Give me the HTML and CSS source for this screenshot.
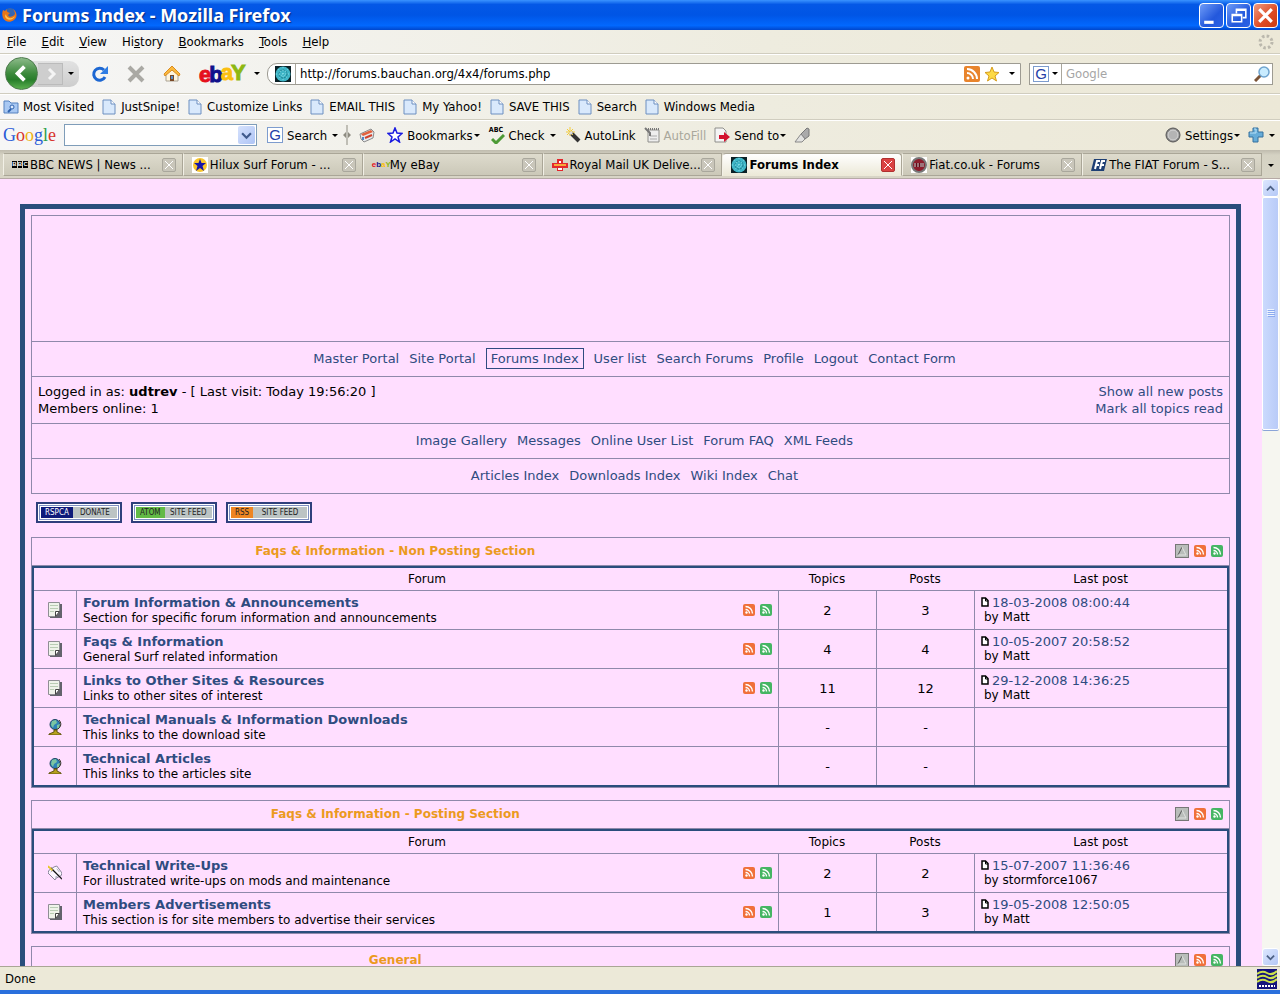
FILE: index.html
```html
<!DOCTYPE html>
<html lang="en">
<head>
    <meta charset="UTF-8">
    <meta name="viewport" content="width=device-width, initial-scale=1.0">
    <title>Forums Index</title>
    <link rel="stylesheet" href="styles.css">
</head>
<body>
    <div class="title-bar">
        <svg class="icon" viewBox="0 0 16 16"><circle cx="8" cy="7" r="6" fill="#3565b0"/><path d="M1 3l2 1 2-2c-1 3 1 3 3 4l-2 2c1 3 5 2 7-1 0-2-1-3-2-5 4 3 5 8 1 11s-9 2-11-2c-1-3-1-5 0-8z" fill="#e8751a"/><path d="M4 7c0 4 5 6 9 2-2 5-9 5-10 0z" fill="#ffc44a"/></svg>
        <span class="title-text">Forums Index - Mozilla Firefox</span>
        <button class="win-btn" aria-label="Minimize"><svg viewBox="0 0 22 22"><path d="M4 16h9v3H4z" fill="#fff"/></svg></button>
        <button class="win-btn" aria-label="Restore"><svg viewBox="0 0 22 22"><path d="M9 9V5h9v8h-3M9 6h9" fill="none" stroke="#fff" stroke-width="1.500"/><path d="M5 10h9v7H5zM5 11h9" fill="none" stroke="#fff" stroke-width="1.500"/></svg></button>
        <button class="win-btn win-close" aria-label="Close"><svg viewBox="0 0 22 22"><path d="M5 5l12 12M17 5L5 17" stroke="#fff" stroke-width="3"/></svg></button>
    </div>

    <div class="bar menu-bar">
        <button><u>F</u>ile</button>
        <button><u>E</u>dit</button>
        <button><u>V</u>iew</button>
        <button>Hi<u>s</u>tory</button>
        <button><u>B</u>ookmarks</button>
        <button><u>T</u>ools</button>
        <button><u>H</u>elp</button>
        <svg class="icon throbber" viewBox="0 0 16 16"><circle cx="8" cy="8" r="6" fill="none" stroke="#bbb8ad" stroke-width="3" stroke-dasharray="2.5 2.2"/></svg>
    </div>

    <div class="bar nav-bar">
        <div class="history-btns">
            <button class="back-btn" aria-label="Back"><svg viewBox="0 0 32 32"><path d="M19 9l-7 7 7 7" fill="none" stroke="#fff" stroke-width="4"/></svg></button>
            <button class="forward-btn" aria-label="Forward"><svg viewBox="0 0 24 20"><path d="M11 5l5 5-5 5" fill="none" stroke="#f4f4f4" stroke-width="3"/></svg></button>
            <button class="arrow" aria-label="Recent pages"></button>
        </div>
        <button class="nav-btn" aria-label="Reload"><svg viewBox="0 0 18 18"><path d="M14 12a6 6 0 1 1-1-7" fill="none" stroke="#1d67d2" stroke-width="3"/><path d="M17 1v8H9z" fill="#2f7de4"/></svg></button>
        <button class="nav-btn" aria-label="Stop"><svg viewBox="0 0 18 18"><path d="M2 2l14 14M16 2L2 16" stroke="#aaa9a4" stroke-width="4"/></svg></button>
        <button class="nav-btn" aria-label="Home"><svg viewBox="0 0 18 18"><path d="M3 9l6-6 6 6v7H3z" fill="#fff5dd" stroke="#a9a294"/><path d="M9 1L1 9l1 2 7-6 7 6 1-2z" fill="#fbb93c" stroke="#d98b20"/><path d="M7 10h4v6H7z" fill="#7a4a28"/><path d="M8 11h2v3H8z" fill="#5a91cf"/></svg></button>
        <button class="ebay-btn" aria-label="eBay"><span class="eb-e">e</span><span class="eb-b">b</span><span class="eb-a">a</span><span class="eb-y">Y</span></button>
        <button class="arrow ebay-arrow" aria-label="eBay menu"></button>
        <div class="url-box">
            <svg class="icon"><use href="#i-surf"/></svg>
            <input class="url-input" type="text" aria-label="Location" value="http://forums.bauchan.org/4x4/forums.php">
            <svg class="icon"><use href="#i-rss"/></svg>
            <svg class="icon" viewBox="0 0 16 16"><path d="M8 1l2 5 5 .5-4 3.500 1.500 5L8 12l-4.500 3L5 10 1 6.500 6 6z" fill="#fdda45" stroke="#d69d1c"/></svg>
            <button class="arrow url-arrow" aria-label="Show history"></button>
        </div>
        <div class="search-box">
            <span class="g-icon">G</span>
            <button class="arrow" aria-label="Search engine"></button>
            <input class="search-input" type="text" aria-label="Search" placeholder="Google">
            <svg class="icon" viewBox="0 0 16 16"><path d="M1 15l6-6" stroke="#7b5336" stroke-width="3"/><circle cx="10" cy="6" r="5" fill="#c9ecff" stroke="#6fa4cf" stroke-width="1.500"/></svg>
        </div>
    </div>

    <div class="bar bookmarks-bar">
        <a href="#"><svg class="icon" viewBox="0 0 16 16"><path d="M1 2h5l2 2h7v10H1z" fill="#a8c8f3" stroke="#5481bf"/><circle cx="9" cy="8" r="2" fill="#dcebff" stroke="#2e62ae"/><path d="M8 10l-3 3" stroke="#2e62ae" stroke-width="2"/></svg>Most Visited</a>
        <a href="#"><svg class="icon"><use href="#i-page"/></svg>JustSnipe!</a>
        <a href="#"><svg class="icon"><use href="#i-page"/></svg>Customize Links</a>
        <a href="#"><svg class="icon"><use href="#i-page"/></svg>EMAIL THIS</a>
        <a href="#"><svg class="icon"><use href="#i-page"/></svg>My Yahoo!</a>
        <a href="#"><svg class="icon"><use href="#i-page"/></svg>SAVE THIS</a>
        <a href="#"><svg class="icon"><use href="#i-page"/></svg>Search</a>
        <a href="#"><svg class="icon"><use href="#i-page"/></svg>Windows Media</a>
    </div>

    <div class="bar google-bar">
        <button class="google-logo"><span class="g-blue">G</span><span class="g-red">o</span><span class="g-yellow">o</span><span class="g-blue">g</span><span class="g-green">l</span><span class="g-red">e</span></button>
        <div class="combo">
            <input type="text" aria-label="Google search">
            <button aria-label="Search history"><svg viewBox="0 0 10 10"><path d="M1 3l4 4 4-4" fill="none" stroke="#3f5a8c" stroke-width="2"/></svg></button>
        </div>
        <button class="tool search-tool"><span class="g-icon">G</span>Search</button>
        <button class="arrow" aria-label="Search options"></button>
        <svg class="splitter" viewBox="0 0 8 20"><path d="M4 0v20" stroke="#8d8b80"/><path d="M3 7v6L0 10zM5 7v6l3-3z" fill="#8d8b80"/></svg>
        <button class="tool" aria-label="Gadgets"><svg class="icon" viewBox="0 0 16 16"><path d="M1 7l11-5 3 3-1 6-9 4-3-3z" fill="#e6e9ec" stroke="#8b8b8b"/><path d="M2 7l10-4 2 2-10 4z" fill="#e2613d"/><path d="M6 11l7-3" stroke="#d0402b" stroke-width="2"/><path d="M4 10v3" stroke="#4d84c5" stroke-width="2"/></svg></button>
        <button class="tool bookmarks-tool"><svg class="icon" viewBox="0 0 16 16"><path d="M8 1l2 5 5 .5-4 3.500 1.500 5L8 12l-4.500 3L5 10 1 6.500 6 6z" fill="#fff" stroke="#1a1ae0" stroke-width="1.500"/></svg>Bookmarks<i class="caret"></i></button>
        <button class="tool check-tool"><span class="abc">ABC<svg viewBox="0 0 14 10"><path d="M1 5l4 4 8-8" fill="none" stroke="#4c9a35" stroke-width="3"/></svg></span>Check</button>
        <button class="arrow" aria-label="Check options"></button>
        <button class="tool autolink-tool"><svg class="icon" viewBox="0 0 16 16"><path d="M6 6l8 8" stroke="#333" stroke-width="4"/><path d="M5 0v9M1 5h9M2 2l6 6M8 2L2 8" stroke="#f2cb3a"/><path d="M5 5l2 2" stroke="#ddd" stroke-width="3"/></svg>AutoLink</button>
        <button class="tool" disabled><svg class="icon" viewBox="0 0 16 16"><path d="M4 3h11v12H4z" fill="#eee" stroke="#8e8e8a"/><path d="M4 2h11" stroke="#777" stroke-width="2" stroke-dasharray="1 1"/><path d="M6 9h7M6 12h7" stroke="#aaa"/><path d="M1 1l5 5v3" fill="none" stroke="#777" stroke-width="2"/></svg>AutoFill</button>
        <button class="tool"><svg class="icon" viewBox="0 0 16 16"><path d="M1 1h8l3 3v11H1z" fill="#f4f4f4" stroke="#8e8e8a"/><path d="M5 8h5V5l6 5-6 5v-3H5z" fill="#d3122e"/></svg>Send to<i class="caret"></i></button>
        <button class="tool" aria-label="Highlight"><svg class="icon" viewBox="0 0 16 16"><path d="M7 7l6-6 2 1v7l-4 3z" fill="#aaa" stroke="#777"/><path d="M7 7l4 5-3 3H1z" fill="#e2e2e0" stroke="#888"/></svg></button>
        <button class="tool settings-tool"><svg class="icon" viewBox="0 0 16 16"><circle cx="8" cy="8" r="7" fill="#8e8e8e" stroke="#555"/><circle cx="8" cy="8" r="5" fill="#b4b4b4" stroke="#d8d8d8"/></svg>Settings<i class="caret"></i></button>
        <button class="tool" aria-label="Add"><svg class="icon" viewBox="0 0 16 16"><path d="M5 1h5v4h5v5h-5v5H5v-5H1V5h4z" fill="#67acd8" stroke="#34719f"/><path d="M6 2h2v4H2" fill="none" stroke="#b8e0f6"/></svg></button>
        <button class="arrow" aria-label="More"></button>
    </div>

    <div class="tab-strip">
        <div class="tab"><span class="bbc"><b>B</b><b>B</b><b>C</b></span><a href="#">BBC NEWS | News ...</a><button class="tab-close" aria-label="Close tab"></button></div>
        <div class="tab"><svg class="icon" viewBox="0 0 16 16"><path d="M0 0h16v16H0z" fill="#fff"/><circle cx="8" cy="8" r="7" fill="#f7c52c"/><path d="M8 2l1.500 4H14l-3.500 3 1.500 5-4-3-4 3 1.500-5L2 6h4.500z" fill="#1414a8"/></svg><a href="#">Hilux Surf Forum - ...</a><button class="tab-close" aria-label="Close tab"></button></div>
        <div class="tab"><span class="ebay-mini"><span class="eb-e">e</span><span class="eb-b">b</span><span class="eb-a">a</span><span class="eb-y">Y</span></span><a href="#">My eBay</a><button class="tab-close" aria-label="Close tab"></button></div>
        <div class="tab"><svg class="icon" viewBox="0 0 16 16"><path d="M0 6h16v5H0z" fill="#e3262c"/><path d="M5 2h6v12H5z" fill="#e3262c"/><path d="M2 8h12" stroke="#ffd23c" stroke-width="1.500"/><path d="M7 4h2v2H7zM6 11h4v2H6z" fill="#fff"/></svg><a href="#">Royal Mail UK Delive...</a><button class="tab-close" aria-label="Close tab"></button></div>
        <div class="tab active"><svg class="icon"><use href="#i-surf"/></svg><a href="#">Forums Index</a><button class="tab-close" aria-label="Close tab"></button></div>
        <div class="tab"><svg class="icon" viewBox="0 0 16 16"><path d="M0 0h16v16H0z" fill="#fff"/><circle cx="8" cy="8" r="7" fill="#8d1b2b" stroke="#777" stroke-width="2"/><path d="M3 6h10v4H3z" fill="#5d0b18"/><path d="M4 6v4M7 6v4M10 6v4M12 6v4" stroke="#ddd"/></svg><a href="#">Fiat.co.uk - Forums</a><button class="tab-close" aria-label="Close tab"></button></div>
        <div class="tab"><svg class="icon" viewBox="0 0 16 16"><path d="M3 2h13l-3 12H0z" fill="#1e3f74"/><path d="M4 12l2-8h3M5 8h3M9 12l2-8h3M10 8h3" fill="none" stroke="#fff" stroke-width="2"/></svg><a href="#">The FIAT Forum - S...</a><button class="tab-close" aria-label="Close tab"></button></div>
        <button class="arrow" aria-label="List all tabs"></button>
    </div>

    <div class="viewport">
        <main class="page">
            <div class="wrapper">
                <div class="header">
                    <div class="banner"></div>
                    <nav class="links">
                        <a href="#">Master Portal</a>
                        <a href="#">Site Portal</a>
                        <a href="#" class="current">Forums Index</a>
                        <a href="#">User list</a>
                        <a href="#">Search Forums</a>
                        <a href="#">Profile</a>
                        <a href="#">Logout</a>
                        <a href="#">Contact Form</a>
                    </nav>
                    <div class="user-info">
                        <div>Logged in as: <b>udtrev</b> - [ Last visit: Today 19:56:20 ]<br>Members online: 1</div>
                        <div class="user-links"><a href="#">Show all new posts</a><br><a href="#">Mark all topics read</a></div>
                    </div>
                    <nav class="links">
                        <a href="#">Image Gallery</a>
                        <a href="#">Messages</a>
                        <a href="#">Online User List</a>
                        <a href="#">Forum FAQ</a>
                        <a href="#">XML Feeds</a>
                    </nav>
                    <nav class="links">
                        <a href="#">Articles Index</a>
                        <a href="#">Downloads Index</a>
                        <a href="#">Wiki Index</a>
                        <a href="#">Chat</a>
                    </nav>
                </div>

                <div class="badges">
                    <a href="#" class="badge badge-rspca"><b>RSPCA</b><span>DONATE</span></a>
                    <a href="#" class="badge badge-atom"><b>ATOM</b><span>SITE FEED</span></a>
                    <a href="#" class="badge badge-rss"><b>RSS</b><span>SITE FEED</span></a>
                </div>

                <section class="category">
                    <div class="category-header">
                        <h2>Faqs &amp; Information - Non Posting Section</h2>
                        <button class="collapse-btn" aria-label="Collapse"><svg><use href="#i-collapse"/></svg></button>
                        <a href="#" aria-label="RSS"><svg class="feed"><use href="#i-feed-o"/></svg></a>
                        <a href="#" aria-label="Atom"><svg class="feed"><use href="#i-feed-g"/></svg></a>
                    </div>
                    <table>
                        <colgroup><col class="col-icon"><col><col class="col-num"><col class="col-num"><col class="col-last"></colgroup>
                        <thead>
                            <tr><th></th><th>Forum</th><th>Topics</th><th>Posts</th><th>Last post</th></tr>
                        </thead>
                        <tbody>
                            <tr>
                                <td class="status"><svg><use href="#i-note"/></svg></td>
                                <td><div class="forum"><div><a href="#">Forum Information &amp; Announcements</a><br>Section for specific forum information and announcements</div><svg class="feed"><use href="#i-feed-o"/></svg><svg class="feed"><use href="#i-feed-g"/></svg></div></td>
                                <td class="num">2</td><td class="num">3</td>
                                <td class="last"><svg><use href="#i-doc"/></svg><a href="#">18-03-2008 08:00:44</a><div>by Matt</div></td>
                            </tr>
                            <tr>
                                <td class="status"><svg><use href="#i-note"/></svg></td>
                                <td><div class="forum"><div><a href="#">Faqs &amp; Information</a><br>General Surf related information</div><svg class="feed"><use href="#i-feed-o"/></svg><svg class="feed"><use href="#i-feed-g"/></svg></div></td>
                                <td class="num">4</td><td class="num">4</td>
                                <td class="last"><svg><use href="#i-doc"/></svg><a href="#">10-05-2007 20:58:52</a><div>by Matt</div></td>
                            </tr>
                            <tr>
                                <td class="status"><svg><use href="#i-note"/></svg></td>
                                <td><div class="forum"><div><a href="#">Links to Other Sites &amp; Resources</a><br>Links to other sites of interest</div><svg class="feed"><use href="#i-feed-o"/></svg><svg class="feed"><use href="#i-feed-g"/></svg></div></td>
                                <td class="num">11</td><td class="num">12</td>
                                <td class="last"><svg><use href="#i-doc"/></svg><a href="#">29-12-2008 14:36:25</a><div>by Matt</div></td>
                            </tr>
                            <tr>
                                <td class="status"><svg><use href="#i-globe"/></svg></td>
                                <td><div class="forum"><div><a href="#">Technical Manuals &amp; Information Downloads</a><br>This links to the download site</div></div></td>
                                <td class="num">-</td><td class="num">-</td>
                                <td class="last"></td>
                            </tr>
                            <tr>
                                <td class="status"><svg><use href="#i-globe"/></svg></td>
                                <td><div class="forum"><div><a href="#">Technical Articles</a><br>This links to the articles site</div></div></td>
                                <td class="num">-</td><td class="num">-</td>
                                <td class="last"></td>
                            </tr>
                        </tbody>
                    </table>
                </section>

                <section class="category">
                    <div class="category-header">
                        <h2>Faqs &amp; Information - Posting Section</h2>
                        <button class="collapse-btn" aria-label="Collapse"><svg><use href="#i-collapse"/></svg></button>
                        <a href="#" aria-label="RSS"><svg class="feed"><use href="#i-feed-o"/></svg></a>
                        <a href="#" aria-label="Atom"><svg class="feed"><use href="#i-feed-g"/></svg></a>
                    </div>
                    <table>
                        <colgroup><col class="col-icon"><col><col class="col-num"><col class="col-num"><col class="col-last"></colgroup>
                        <thead>
                            <tr><th></th><th>Forum</th><th>Topics</th><th>Posts</th><th>Last post</th></tr>
                        </thead>
                        <tbody>
                            <tr>
                                <td class="status"><svg><use href="#i-write"/></svg></td>
                                <td><div class="forum"><div><a href="#">Technical Write-Ups</a><br>For illustrated write-ups on mods and maintenance</div><svg class="feed"><use href="#i-feed-o"/></svg><svg class="feed"><use href="#i-feed-g"/></svg></div></td>
                                <td class="num">2</td><td class="num">2</td>
                                <td class="last"><svg><use href="#i-doc"/></svg><a href="#">15-07-2007 11:36:46</a><div>by stormforce1067</div></td>
                            </tr>
                            <tr>
                                <td class="status"><svg><use href="#i-note"/></svg></td>
                                <td><div class="forum"><div><a href="#">Members Advertisements</a><br>This section is for site members to advertise their services</div><svg class="feed"><use href="#i-feed-o"/></svg><svg class="feed"><use href="#i-feed-g"/></svg></div></td>
                                <td class="num">1</td><td class="num">3</td>
                                <td class="last"><svg><use href="#i-doc"/></svg><a href="#">19-05-2008 12:50:05</a><div>by Matt</div></td>
                            </tr>
                        </tbody>
                    </table>
                </section>

                <section class="category">
                    <div class="category-header">
                        <h2>General</h2>
                        <button class="collapse-btn" aria-label="Collapse"><svg><use href="#i-collapse"/></svg></button>
                        <a href="#" aria-label="RSS"><svg class="feed"><use href="#i-feed-o"/></svg></a>
                        <a href="#" aria-label="Atom"><svg class="feed"><use href="#i-feed-g"/></svg></a>
                    </div>
                </section>
            </div>
        </main>
        <div class="scrollbar">
            <button aria-label="Scroll up"><svg viewBox="0 0 10 10"><path d="M1 7l4-4 4 4" fill="none" stroke="#4d6185" stroke-width="2"/></svg></button>
            <div class="track"><div class="thumb"><svg viewBox="0 0 8 8"><path d="M0 0.500h7M0 2.500h7M0 4.500h7M0 6.500h7" stroke="#eef4fe"/><path d="M1 1.500h7M1 3.500h7M1 5.500h7M1 7.500h7" stroke="#8caaf0"/></svg></div></div>
            <button aria-label="Scroll down"><svg viewBox="0 0 10 10"><path d="M1 3l4 4 4-4" fill="none" stroke="#4d6185" stroke-width="2"/></svg></button>
        </div>
    </div>

    <div class="status-bar">
        <span>Done</span>
        <svg class="weather" viewBox="0 0 20 20"><path d="M0 0h20v20H0z" fill="#14147c"/><path d="M0 5q5-4 10-1t10-2M0 9q5-4 10-1t10-2M0 13q5-4 10-1t10-2" fill="none" stroke="#cbe04c" stroke-width="2"/><path d="M2 17h16" stroke="#fff" stroke-width="2" stroke-dasharray="2 1"/></svg>
    </div>

    <svg class="sprite">
        <symbol id="i-page" viewBox="0 0 16 16"><path d="M2 1h8l4 4v10H2z" fill="#d9e9fc" stroke="#6c8fc0"/><path d="M10 1v4h4" fill="#fff" stroke="#6c8fc0"/></symbol>
        <symbol id="i-surf" viewBox="0 0 16 16"><path d="M0 0h16v16H0z" fill="#0b2026"/><circle cx="8" cy="8" r="7.500" fill="#3fb5c6"/><circle cx="8" cy="8" r="4" fill="none" stroke="#1c7c8c" stroke-dasharray="2 1"/><path d="M8 1v14M1 8h14M3 3l10 10M13 3L3 13" stroke="#83dbe5" stroke-dasharray="1 2"/></symbol>
        <symbol id="i-rss" viewBox="0 0 16 16"><rect width="16" height="16" rx="2" fill="#e8842c"/><circle cx="4" cy="12" r="1.500" fill="#fff"/><path d="M3 7a6 6 0 0 1 6 6M3 3a10 10 0 0 1 10 10" fill="none" stroke="#fff" stroke-width="2"/></symbol>
        <symbol id="i-feed-o" viewBox="0 0 12 12"><rect width="12" height="12" rx="2" fill="#f0703a"/><circle cx="3.500" cy="8.500" r="1.200" fill="#fff"/><path d="M2.500 5.500a4 4 0 0 1 4 4M2.500 2.500a7 7 0 0 1 7 7" fill="none" stroke="#fff" stroke-width="1.400"/></symbol>
        <symbol id="i-feed-g" viewBox="0 0 12 12"><rect width="12" height="12" rx="2" fill="#45b563"/><circle cx="3.500" cy="8.500" r="1.200" fill="#fff"/><path d="M2.500 5.500a4 4 0 0 1 4 4M2.500 2.500a7 7 0 0 1 7 7" fill="none" stroke="#fff" stroke-width="1.400"/></symbol>
        <symbol id="i-collapse" viewBox="0 0 12 12"><path d="M2 10l4-8" stroke="#555"/><path d="M6 2l4 8H2" fill="none" stroke="#e0e2e0"/></symbol>
        <symbol id="i-note" viewBox="0 0 14 16"><path d="M2 2h12v14H2z" fill="#63636c"/><path d="M.5 .5h11v9l-4 5h-7z" fill="#eff3ea" stroke="#8f8e94"/><path d="M11.500 9.500l-4 5v-5z" fill="#fff" stroke="#444"/><path d="M2 3.500h8M2 6.500h8M2 9.500h4" stroke="#b9ccb4"/></symbol>
        <symbol id="i-globe" viewBox="0 0 14 16"><circle cx="7" cy="5.500" r="5" fill="#2e82b8" stroke="#1d4560"/><path d="M4 2l4-1 1 3-3 2-1 3-2-3zM9 6l3-1-1 4-2 1z" fill="#7cc6a0"/><path d="M11 1c4 4 1 10-5 10" fill="none" stroke="#39372a"/><path d="M6 11h3v2l4 2v1H1v-1l5-2z" fill="#b7a21e" stroke="#5f5410"/></symbol>
        <symbol id="i-write" viewBox="0 0 16 18"><path d="M7 2l3-1 6 8-1 3-6 3-1 2-8-8 1-3z" fill="#fbf6ff" stroke="#77768a"/><path d="M3 8l4-3M8 14l5-3M10 4l3 4" stroke="#a9a9bb"/><path d="M3 3l13 13" stroke="#111" stroke-width="1.500"/><path d="M0 1l5 5" stroke="#e8c92c" stroke-width="2"/></symbol>
        <symbol id="i-doc" viewBox="0 0 8 10"><path d="M1 1h3.500L7 3.500V9H1z" fill="#fff" stroke="#000" stroke-width="1.500"/><path d="M4.500 1v3H7" fill="none" stroke="#000"/></symbol>
    </svg>
</body>
</html>
```
FILE: styles.css
```css
* {
    margin: 0;
    padding: 0;
    box-sizing: border-box;
}

body {
    height: 100vh;
    display: flex;
    flex-direction: column;
    overflow: hidden;
    background: linear-gradient(90deg, #f6f6f6 0%, #eeecdf 60%, #ece8d7 100%);
    font-family: "DejaVu Sans Condensed", "DejaVu Sans", sans-serif;
    font-size: 13px;
    color: #000;
}

button,
input {
    font: inherit;
    color: inherit;
    background: none;
    border: none;
    outline: none;
}

a {
    color: #2f4c80;
    text-decoration: none;
}

svg {
    display: block;
    flex-shrink: 0;
}

.icon {
    width: 16px;
    height: 16px;
}

.sprite {
    width: 0;
    height: 0;
}

/* Title bar */
.title-bar {
    height: 30px;
    flex-shrink: 0;
    display: flex;
    align-items: center;
    gap: 2px;
    padding: 0 2px;
    background: linear-gradient(#3a93ff 0%, #0458e6 15%, #0055e5 50%, #0268fe 85%, #0046cc 100%);
}

.title-text {
    flex: 1;
    margin-left: 2px;
    color: #fff;
    font-family: "Noto Sans", sans-serif;
    font-size: 18px;
    font-weight: bold;
    text-shadow: 1px 1px 1px #0a2a80;
}

.win-btn {
    width: 25px;
    height: 25px;
    border: 1px solid #fff;
    border-radius: 4px;
    background: linear-gradient(135deg, #6f9cf8, #2358dc 60%, #2a62e6);
}

.win-close {
    background: linear-gradient(135deg, #f09a80, #dd4a22 60%, #c83c14);
}

/* Toolbars */
.bar {
    flex-shrink: 0;
    display: flex;
    align-items: center;
    border-bottom: 1px solid #d0cdbf;
    box-shadow: 0 1px 0 #fff;
}

.menu-bar {
    height: 24px;
    padding: 0 6px 0 7px;
    gap: 15px;
}

.throbber {
    margin-left: auto;
}

.nav-bar {
    height: 40px;
    padding: 0 7px 0 5px;
}

.arrow {
    width: 16px;
    height: 16px;
    display: flex;
    align-items: center;
    justify-content: center;
    flex-shrink: 0;
}

.arrow::after,
.caret {
    content: "";
    border: 3px solid transparent;
    border-top-color: #000;
    border-bottom: 0;
}

.history-btns {
    display: flex;
    align-items: center;
    height: 26px;
    border-radius: 14px 10px 10px 14px;
    background: linear-gradient(#e2e2e2, #cdcdcd);
}

.back-btn {
    width: 33px;
    height: 33px;
    border: 1px solid #4c7a4c;
    border-radius: 50%;
    background: linear-gradient(#8dbb8a, #3c8a3c 50%, #277d2a 70%, #5bb04f);
}

.forward-btn {
    width: 25px;
    height: 22px;
    border: 1px solid #bbb;
    border-left: 0;
    background: #cecece;
}

.nav-btn {
    width: 18px;
    height: 18px;
    margin-left: 18px;
}

.history-btns + .nav-btn {
    margin-left: 12px;
}

.ebay-btn {
    width: 44px;
    margin-left: 18px;
    font-family: "Liberation Sans", sans-serif;
    font-size: 22px;
    font-weight: bold;
    line-height: 24px;
    text-align: left;
    white-space: nowrap;
    -webkit-text-stroke: 1px;
}

.ebay-btn span + span {
    margin-left: -2px;
}

.ebay-btn .eb-a,
.ebay-btn .eb-y {
    vertical-align: 2px;
}

.eb-e { color: #e5101c; }
.eb-b { color: #10108c; }
.eb-a { color: #fbbf10; }
.eb-y { color: #8eb811; }

.ebay-arrow {
    margin-left: 6px;
}

.url-box,
.search-box {
    height: 22px;
    display: flex;
    align-items: center;
    background: #fff;
    border: 1px solid #9d9b92;
}

.url-box {
    flex: 1;
    gap: 4px;
    margin-left: 2px;
    padding-left: 7px;
    border-radius: 10px 0 0 10px;
}

.url-input {
    flex: 1;
    min-width: 0;
    height: 20px;
    padding-left: 4px;
    border-left: 1px solid #aaa79c;
}

.search-box {
    width: 244px;
    margin-left: 8px;
    padding: 0 2px 0 3px;
}

.search-input {
    flex: 1;
    min-width: 0;
    height: 20px;
    padding-left: 4px;
    border-left: 1px solid #aaa79c;
}

.search-input::placeholder {
    color: #a5a5a5;
    opacity: 1;
}

.search-box .arrow {
    width: 12px;
}

.g-icon {
    width: 16px;
    height: 16px;
    flex-shrink: 0;
    border: 1px solid #7d9cce;
    background: #fff;
    color: #2440a8;
    font-family: "Liberation Sans", sans-serif;
    font-size: 15px;
    line-height: 14px;
    text-align: center;
}

.bookmarks-bar {
    height: 26px;
    padding-left: 3px;
    gap: 7px;
}

.bookmarks-bar a {
    display: flex;
    align-items: center;
    gap: 4px;
    color: #000;
}

.google-bar {
    height: 30px;
    padding: 0 0 0 3px;
    border-bottom: 0;
    box-shadow: none;
}

.google-logo {
    width: 61px;
    font-family: "Liberation Serif", serif;
    font-size: 18px;
    line-height: 20px;
    text-align: left;
}

.g-blue { color: #2a5bd7; }
.g-red { color: #d8342c; }
.g-yellow { color: #eeb211; }
.g-green { color: #2fa04a; }

.combo {
    display: flex;
    width: 193px;
    height: 22px;
    border: 1px solid #7f9db9;
    background: #fff;
}

.combo input {
    flex: 1;
    min-width: 0;
}

.combo button {
    width: 17px;
    margin: 1px;
    padding: 3px;
    border-radius: 2px;
    background: linear-gradient(135deg, #d6e2fd, #aec4f5);
}

.tool {
    display: flex;
    align-items: center;
    gap: 4px;
    white-space: nowrap;
    margin-left: 8px;
}

.tool:disabled {
    color: #a9a79b;
}

.search-tool {
    margin-left: 10px;
}

.splitter {
    width: 8px;
    height: 20px;
}

.bookmarks-tool {
    margin-left: 12px;
}

.autolink-tool {
    margin-left: 4px;
}

.tool .caret {
    margin-left: -3px;
}

.abc {
    font-size: 7px;
    font-weight: bold;
    line-height: 7px;
}

.abc svg {
    width: 14px;
    height: 10px;
    margin-left: 3px;
}

.settings-tool {
    margin-left: auto;
}

/* Tabs */
.tab-strip {
    height: 29px;
    flex-shrink: 0;
    display: flex;
    padding: 3px 0 2px 3px;
    border-bottom: 1px solid #b5a9a5;
    background: linear-gradient(#bfbbae, #d5d2c3 5px, #d8d5c6);
}

.tab {
    flex: 1;
    min-width: 0;
    display: flex;
    align-items: center;
    gap: 2px;
    padding: 0 6px 0 8px;
    border: 1px solid #aaa697;
    border-left-color: #f2f0e6;
    background: linear-gradient(#dedbcd, #cbc8b8);
}

.tab a {
    flex: 1;
    margin-right: -2px;
    color: #000;
    white-space: nowrap;
}

.tab.active {
    border-radius: 4px 4px 0 0;
    border-bottom-color: #ece9d8;
    background: linear-gradient(#fff, #ece9d8);
    font-weight: bold;
}

.tab-close {
    width: 14px;
    height: 14px;
    flex-shrink: 0;
    border: 1px solid #a9a79c;
    border-radius: 2px;
    background:
        linear-gradient(45deg, transparent 45%, #fff 45%, #fff 55%, transparent 55%) center / 8px 8px no-repeat,
        linear-gradient(-45deg, transparent 45%, #fff 45%, #fff 55%, transparent 55%) center / 8px 8px no-repeat,
        #c9c6ba;
}

.active .tab-close {
    border-color: #b03030;
    background-color: #da4242;
}

.bbc {
    width: 16px;
    display: flex;
    gap: 1px;
    font-family: "Liberation Sans", sans-serif;
    font-size: 6px;
    line-height: 7px;
}

.bbc b {
    flex: 1;
    background: #000;
    color: #fff;
    text-align: center;
}

.ebay-mini {
    width: 16px;
    font-family: "Liberation Sans", sans-serif;
    font-size: 8px;
    font-weight: bold;
    white-space: nowrap;
}

.tab-strip > .arrow {
    width: 18px;
    height: 24px;
}

/* Page */
.viewport {
    flex: 1;
    min-height: 0;
    display: flex;
}

.page {
    flex: 1;
    overflow: hidden;
    padding: 25px 21px 0 20px;
    background: #ffdeff;
    font-family: "DejaVu Sans", sans-serif;
}

.wrapper {
    min-height: 100%;
    padding: 6px;
    border: 5px solid #2a4d7c;
}

.header {
    border: 1px solid #8f89ab;
}

.header > * + * {
    border-top: 1px solid #8f89ab;
}

.banner {
    height: 125px;
}

.links {
    height: 35px;
    display: flex;
    justify-content: center;
    align-items: center;
    gap: 10px;
    padding: 0 0 2px 8px;
}

.links .current {
    padding: 2px 4px;
    border: 1px solid #2f4c80;
}

.user-info {
    display: flex;
    justify-content: space-between;
    padding: 6px;
    line-height: 17px;
}

.user-links {
    text-align: right;
}

.badges {
    display: flex;
    gap: 9px;
    padding: 8px 5px 14px;
}

.badge {
    width: 86px;
    height: 21px;
    display: flex;
    padding: 3px;
    border: 2px solid #2f3f7c;
    background: #fff;
    box-shadow: inset 0 0 0 1px #fff, inset 0 0 0 2px #7d8fc0;
    color: #222;
    font-family: "DejaVu Sans Condensed", sans-serif;
    font-size: 8px;
    line-height: 11px;
    text-align: center;
    white-space: nowrap;
}

.badge b {
    padding: 0 4px;
    font-weight: normal;
}

.badge span {
    flex: 1;
    background: #bcc4c4;
}

.badge-rspca b {
    background: #0e1a7a;
    color: #fff;
}

.badge-atom b { background: #62ba46; }
.badge-rss b { background: #ee8522; }

.category {
    margin-bottom: 12px;
    border: 1px solid #8f89ab;
}

.category-header {
    height: 28px;
    display: flex;
    align-items: center;
    gap: 5px;
    padding: 0 6px 1px 0;
    border-bottom: 1px solid #8f89ab;
}

.category-header h2 {
    width: 61%;
    margin-right: auto;
    color: #eb9a1e;
    font-size: 12px;
    text-align: center;
}

.collapse-btn {
    width: 14px;
    height: 14px;
    border: 1px solid #777;
    background: #b9bdba;
}

.collapse-btn svg {
    width: 12px;
    height: 12px;
}

.feed {
    width: 12px;
    height: 12px;
}

table {
    width: 100%;
    table-layout: fixed;
    border: 2px solid #2a4d7c;
    border-spacing: 0;
    line-height: 15px;
}

.col-icon { width: 42px; }
.col-num { width: 98px; }
.col-last { width: 253px; }

th {
    height: 22px;
    font-size: 12px;
    font-weight: normal;
}

td {
    height: 39px;
    padding: 0 6px;
    border-top: 1px solid #8f89ab;
}

td + td {
    border-left: 1px solid #8f89ab;
}

.status svg {
    width: 14px;
    height: 16px;
    margin: 0 auto;
}

.forum {
    display: flex;
    align-items: center;
    gap: 5px;
    font-size: 12px;
}

.forum div {
    flex: 1;
}

.forum a {
    font-size: 13px;
    font-weight: bold;
}

.num {
    text-align: center;
}

.last {
    font-size: 12px;
    line-height: 14px;
}

.last a {
    font-size: 13px;
}

.last svg {
    display: inline-block;
    width: 8px;
    height: 10px;
    margin-right: 3px;
}

.last div {
    padding-left: 3px;
}

/* Scrollbar */
.scrollbar {
    width: 18px;
    display: flex;
    flex-direction: column;
    background: #f6f6f0;
}

.scrollbar button {
    width: 17px;
    height: 18px;
    padding: 3px;
    border: 1px solid #fff;
    border-radius: 3px;
    background: linear-gradient(135deg, #dde7fe, #b4c8f6);
}

.track {
    flex: 1;
}

.thumb {
    width: 17px;
    height: 31%;
    display: flex;
    align-items: center;
    justify-content: center;
    border: 1px solid #fff;
    border-radius: 2px;
    box-shadow: 0 1px 0 #8ba4d8;
    background: linear-gradient(90deg, #cbdafd, #b9cbf8);
}

.thumb svg {
    width: 8px;
    height: 8px;
}

/* Status bar */
.status-bar {
    height: 28px;
    flex-shrink: 0;
    display: flex;
    align-items: center;
    justify-content: space-between;
    padding: 0 3px 0 5px;
    border-top: 1px solid #a9a695;
    border-bottom: 4px solid #2a6fdc;
    background: #ece9d8;
}

.weather {
    width: 20px;
    height: 20px;
}
```
